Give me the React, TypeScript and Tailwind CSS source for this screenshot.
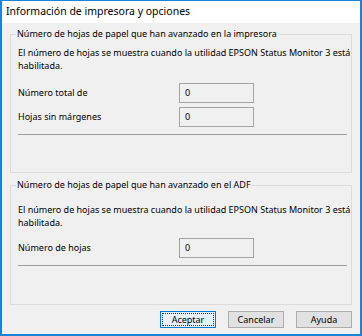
import React from "react";

const font = { fontFamily: '"Noto Sans", "Liberation Sans", sans-serif' };

function Legend({ children }: { children: React.ReactNode }) {
  return (
    <span className="-mt-[8px] ml-[5px] block w-fit bg-[#f0f0f0] px-[1px] leading-[14px]">
      {children}
    </span>
  );
}

function Field({ label, value, top }: { label: string; value: string; top: string }) {
  return (
    <div className={`flex items-center ${top}`}>
      <span className="ml-[7px] w-[161px] leading-[14px]">{label}</span>
      <div className="flex h-[20px] w-[75px] items-center border border-[#a5a5a5] bg-[#f0f0f0] pl-[5px] leading-[14px]">
        {value}
      </div>
    </div>
  );
}

function Button({ label, focused }: { label: string; focused?: boolean }) {
  return (
    <button
      className={`flex h-[17px] w-[56px] items-center justify-center leading-[14px] ${
        focused
          ? "border border-[#0078d7] bg-[#e5f1fb] outline-1 outline-dotted outline-[#333] outline-offset-[-3px]"
          : "border border-[#adadad] bg-[#e1e1e1]"
      }`}
    >
      {label}
    </button>
  );
}

export default function App() {
  return (
    <div
      style={font}
      className="flex h-[336px] w-[362px] flex-col border-x-2 border-b-2 border-t border-[#1883d7] bg-[#f0f0f0] text-[9px] text-black"
    >
      {/* Title bar */}
      <div className="flex h-[22px] items-center bg-white pl-[4px] text-[10.5px]">
        Información de impresora y opciones
      </div>

      <div className="flex flex-1 flex-col px-[8px]">
        {/* Group 1 */}
        <div className="mt-[11px] flex h-[139px] flex-col border border-[#dcdcdc]">
          <Legend>Número de hojas de papel que han avanzado en la impresora</Legend>
          <p className="ml-[7px] mt-[5px] whitespace-nowrap leading-[13px]">
            El número de hojas se muestra cuando la utilidad EPSON Status Monitor 3 está
            <br />
            habilitada.
          </p>
          <Field label="Número total de" value="0" top="mt-[11px]" />
          <Field label="Hojas sin márgenes" value="0" top="mt-[4px]" />
          <div className="ml-[7px] mr-[4px] mt-[7px] border-t border-[#a0a0a0]" />
        </div>

        {/* Group 2 */}
        <div className="mt-[12px] flex h-[120px] flex-col border border-[#dcdcdc]">
          <Legend>Número de hojas de papel que han avanzado en el ADF</Legend>
          <p className="ml-[7px] mt-[11px] whitespace-nowrap leading-[13px]">
            El número de hojas se muestra cuando la utilidad EPSON Status Monitor 3 está
            <br />
            habilitada.
          </p>
          <Field label="Número de hojas" value="0" top="mt-[9px]" />
          <div className="ml-[7px] mr-[4px] mt-[7px] border-t border-[#a0a0a0]" />
        </div>

        {/* Buttons */}
        <div className="mt-[6px] flex justify-end gap-[12px]">
          <Button label="Aceptar" focused />
          <Button label="Cancelar" />
          <Button label="Ayuda" />
        </div>
      </div>
    </div>
  );
}
